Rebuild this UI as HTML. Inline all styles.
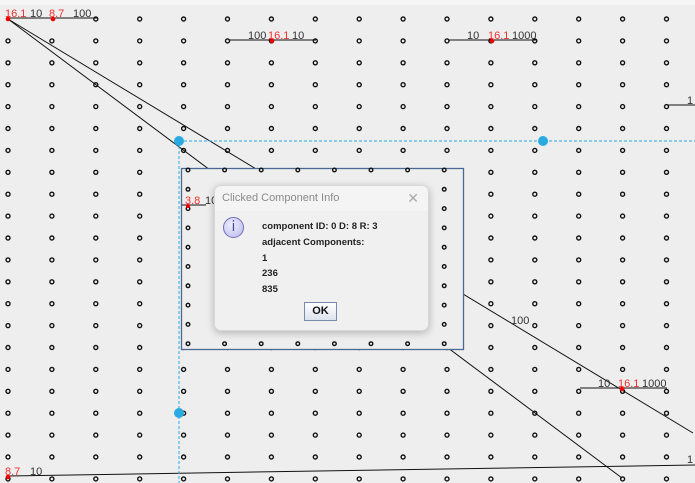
<!DOCTYPE html>
<html><head><meta charset="utf-8"><style>
html,body{margin:0;padding:0;background:#eeeeee;width:695px;height:483px;overflow:hidden;font-family:"Liberation Sans",sans-serif}
svg{position:absolute;left:0;top:0}
#dlg{position:absolute;left:214px;top:185px;width:213px;height:144px;background:#f0f0f0;border:1px solid #d8d8d8;border-radius:7px;box-shadow:0 2px 8px rgba(0,0,0,0.25);overflow:hidden}
#tb{height:25px;background:#f4f4f4;color:#8a8a8a;font-size:11px;line-height:25px;padding-left:7px;position:relative}
#x{position:absolute;right:9px;top:0;font-size:14px;color:#aaa}
#txt{position:absolute;left:47px;top:33px;font-size:9.5px;font-weight:bold;color:#222;line-height:15.8px}
#ico{position:absolute;left:8px;top:31px;width:19px;height:19px;border-radius:50%;background:radial-gradient(circle at 40% 35%,#eef,#b8b8ec);border:1px solid #7070b8;color:#4a4a9a;font-size:14px;text-align:center;line-height:19px;font-family:"DejaVu Sans",sans-serif}
#ok{position:absolute;left:89px;top:116px;width:31px;height:17px;border:1px solid #7a8aa8;background:linear-gradient(#fff,#dde4ee);font-size:11px;font-weight:bold;text-align:center;line-height:17px;color:#111}
</style></head><body>
<svg id="s" width="695" height="483" xmlns="http://www.w3.org/2000/svg" font-family="Liberation Sans, sans-serif" font-size="11">
<rect x="0" y="0" width="695" height="5" fill="#f5f5f5"/>
<g id="grid" fill="none" stroke="#111" stroke-width="1.4"></g>
<g stroke="#111" stroke-width="1">
<line x1="8" y1="19" x2="622" y2="478"/>
<line x1="8" y1="19" x2="693" y2="433"/>
<line x1="8" y1="18" x2="97" y2="18"/>
<line x1="229" y1="40" x2="316" y2="40"/>
<line x1="448" y1="40" x2="536" y2="40"/>
<line x1="667" y1="105" x2="695" y2="105"/>
<line x1="580" y1="388" x2="667" y2="388"/>
<line x1="8" y1="476" x2="695" y2="465"/>
</g>
<g stroke="#29abe2" stroke-width="1" stroke-dasharray="3,2">
<line x1="179" y1="141" x2="695" y2="141"/>
<line x1="179" y1="141" x2="179" y2="483"/>
</g>
<g fill="#29abe2"><circle cx="179" cy="141" r="5"/><circle cx="543" cy="141" r="5"/><circle cx="179" cy="413" r="5"/></g>
<g fill="#e00"><circle cx="8" cy="19" r="2.3"/><circle cx="53" cy="19" r="2.3"/><circle cx="272" cy="41" r="2.3"/><circle cx="492" cy="41" r="2.3"/><circle cx="622" cy="389" r="2.3"/><circle cx="8" cy="477" r="2.3"/></g>
<g fill="#333">
<text x="30" y="17">10</text><text x="73" y="17">100</text>
<text x="248" y="39">100</text><text x="292" y="39">10</text>
<text x="467" y="39">10</text><text x="512" y="39">1000</text>
<text x="687" y="104">1</text>
<text x="598" y="387">10</text><text x="642" y="387">1000</text>
<text x="511" y="324">100</text>
<text x="30" y="475">10</text><text x="687" y="463">1</text>
</g>
<g fill="#f03030">
<text x="5" y="17">16.1</text><text x="49" y="17">8.7</text>
<text x="268" y="39">16.1</text><text x="488" y="39">16.1</text>
<text x="618" y="387">16.1</text><text x="5" y="475">8.7</text>
</g>
<rect x="181.5" y="168.5" width="282" height="181" fill="#eeeeee" stroke="#4a6a94" stroke-width="1.3"/>
<g id="grid2" fill="none" stroke="#111" stroke-width="1.4"></g>
<line x1="182" y1="205" x2="206" y2="205" stroke="#111"/>
<circle cx="188" cy="206" r="2" fill="#e00"/>
<text x="185" y="204" fill="#f03030">3.8</text><text x="205" y="204" fill="#333">10</text>
</svg>
<div id="dlg"><div id="tb">Clicked Component Info<span id="x">✕</span></div>
<div id="ico">i</div>
<div id="txt">component ID: 0 D: 8 R: 3<br>adjacent Components:<br>1<br>236<br>835</div>
<div id="ok">OK</div></div>
<script>
var g=document.getElementById('grid'),h='';
for(var r=0;r<22;r++)for(var c=0;c<16;c++){var x=8+43.9*c,y=19+21.9*r;if(r==0&&c<2)continue;h+='<circle cx="'+x.toFixed(1)+'" cy="'+y.toFixed(1)+'" r="2"/>';}
g.innerHTML=h;h='';
for(var r=0;r<10;r++)for(var c=0;c<8;c++){var x=188+36.6*c,y=170+19.3*r;h+='<circle cx="'+x.toFixed(1)+'" cy="'+y.toFixed(1)+'" r="1.8"/>';}
document.getElementById('grid2').innerHTML=h;
</script>
</body></html>
